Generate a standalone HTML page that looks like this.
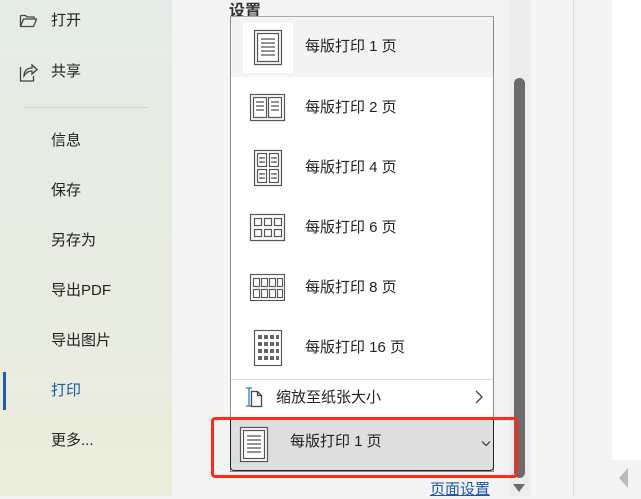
<!DOCTYPE html>
<html><head><meta charset="utf-8"><style>
*{margin:0;padding:0;box-sizing:border-box}
body{width:641px;height:496px;overflow:hidden;position:relative;background:#f4f4f4;font-family:"Liberation Sans","Noto Sans CJK SC",sans-serif;color:#222}
.side{position:absolute;left:0;top:0;width:172px;height:496px;background:linear-gradient(180deg,#e5ece7 0%,#e8ecdf 60%,#eaecdc 100%)}
.si{position:absolute;left:51px;font-size:15px;line-height:20px}
svg{position:absolute}
.dd{position:absolute;left:230px;top:16px;width:264px;height:456px;background:#fff;border:1px solid #8a8a8a;border-top:1px solid #aaa}
.it{position:absolute;left:305px;font-size:15px;line-height:20px;color:#222}
</style></head><body>
<div class="side">
<svg style="left:19px;top:13px" width="20" height="16" viewBox="0 0 20 16"><path d="M1.5 2.5h5l1.5 1.5h7v2M1.5 2.5v11h13l3-7.5h-13l-3 7.5" fill="none" stroke="#444" stroke-width="1.3"/></svg>
<div class="si" style="top:11px">打开</div>
<svg style="left:19px;top:61px" width="20" height="22" viewBox="0 0 20 22"><path d="M1.5 6v14h13v-5" fill="none" stroke="#444" stroke-width="1.3"/><path d="M5 15c0-5 3-8 8-8V4l5 4.5-5 4.5V10c-4 0-6 2-8 5z" fill="none" stroke="#444" stroke-width="1.3"/></svg>
<div class="si" style="top:62px">共享</div>
<div style="position:absolute;left:23px;top:107px;width:125px;height:1px;background:#cfd3cc"></div>
<div class="si" style="top:131px">信息</div>
<div class="si" style="top:181px">保存</div>
<div class="si" style="top:231px">另存为</div>
<div class="si" style="top:281px">导出PDF</div>
<div class="si" style="top:331px">导出图片</div>
<div style="position:absolute;left:3px;top:372px;width:3px;height:38px;background:#1a5fb4"></div>
<div class="si" style="top:381px;color:#1a56a8">打印</div>
<div class="si" style="top:431px">更多...</div>
</div>
<div style="position:absolute;left:229px;top:-3px;font-size:16px;font-weight:bold;color:#333">设置</div>
<div style="position:absolute;left:509px;top:0;width:21px;height:496px;background:#ececec"></div>
<div style="position:absolute;left:514px;top:78px;width:11px;height:400px;background:#6b6b6b;border-radius:6px"></div>
<svg style="left:512px;top:483px" width="14" height="10"><path d="M1 1h12L7 9z" fill="#6b6b6b"/></svg>
<div style="position:absolute;left:573px;top:0;width:1px;height:496px;background:#dcdcdc"></div>
<div style="position:absolute;left:612px;top:0;width:29px;height:460px;background:#fff"></div>
<svg style="left:618px;top:467px" width="12" height="22"><path d="M10 1v20L1 11z" fill="#bbb"/></svg>
<div class="dd"></div>
<div style="position:absolute;left:231px;top:17px;width:262px;height:60px;background:#f3f3f3"></div>
<div style="position:absolute;left:243px;top:23px;width:50px;height:50px;background:#fff"></div>
<svg style="left:240px;top:20px" width="60" height="360" viewBox="0 0 60 360" fill="none" stroke="#555">
<g stroke-width="1.2"><rect x="14.5" y="10.5" width="27" height="34"/><rect x="17.5" y="13.5" width="21" height="28"/>
<path d="M21 19h14M21 23h14M21 27h14M21 31h14M21 35h14"/></g>
<g stroke-width="1.2" transform="translate(0,60)"><rect x="10.5" y="14.5" width="34" height="26"/><rect x="13.5" y="17.5" width="13" height="20"/><rect x="28.5" y="17.5" width="13" height="20"/><path d="M16 22h8M16 26h8M16 30h8M31 22h8M31 26h8M31 30h8"/></g>
<g stroke-width="1.2" transform="translate(0,120)"><rect x="14.5" y="10.5" width="27" height="35"/><rect x="17.5" y="13.5" width="9" height="13"/><rect x="29.5" y="13.5" width="9" height="13"/><rect x="17.5" y="29.5" width="9" height="13"/><rect x="29.5" y="29.5" width="9" height="13"/><path d="M19 18h6M19 22h6M31 18h6M31 22h6M19 34h6M19 38h6M31 34h6M31 38h6"/></g>
<g stroke-width="1.2" transform="translate(0,180)"><rect x="10.5" y="14.5" width="34" height="26"/><rect x="14.5" y="18.5" width="7" height="7"/><rect x="24.5" y="18.5" width="7" height="7"/><rect x="34.5" y="18.5" width="7" height="7"/><rect x="14.5" y="29.5" width="7" height="7"/><rect x="24.5" y="29.5" width="7" height="7"/><rect x="34.5" y="29.5" width="7" height="7"/></g>
<g stroke-width="1.1" transform="translate(0,240)"><rect x="10.5" y="14.5" width="34" height="26"/><rect x="13.5" y="18.5" width="6" height="8"/><rect x="21.5" y="18.5" width="6" height="8"/><rect x="29.5" y="18.5" width="6" height="8"/><rect x="37.5" y="18.5" width="5" height="8"/><rect x="13.5" y="29.5" width="6" height="8"/><rect x="21.5" y="29.5" width="6" height="8"/><rect x="29.5" y="29.5" width="6" height="8"/><rect x="37.5" y="29.5" width="5" height="8"/></g>
<g stroke-width="1.1" transform="translate(0,300)"><rect x="14.5" y="10.5" width="27" height="35"/>
<g fill="#666" stroke="none"><rect x="18" y="15" width="4" height="4"/><rect x="24" y="15" width="4" height="4"/><rect x="30" y="15" width="4" height="4"/><rect x="36" y="15" width="3" height="4"/>
<rect x="18" y="22" width="4" height="4"/><rect x="24" y="22" width="4" height="4"/><rect x="30" y="22" width="4" height="4"/><rect x="36" y="22" width="3" height="4"/>
<rect x="18" y="29" width="4" height="4"/><rect x="24" y="29" width="4" height="4"/><rect x="30" y="29" width="4" height="4"/><rect x="36" y="29" width="3" height="4"/>
<rect x="18" y="36" width="4" height="4"/><rect x="24" y="36" width="4" height="4"/><rect x="30" y="36" width="4" height="4"/><rect x="36" y="36" width="3" height="4"/></g></g>
</svg>
<div class="it" style="top:37px">每版打印 1 页</div>
<div class="it" style="top:98px">每版打印 2 页</div>
<div class="it" style="top:158px">每版打印 4 页</div>
<div class="it" style="top:218px">每版打印 6 页</div>
<div class="it" style="top:278px">每版打印 8 页</div>
<div class="it" style="top:338px">每版打印 16 页</div>
<div style="position:absolute;left:231px;top:379px;width:262px;height:1px;background:#ddd"></div>
<svg style="left:244px;top:386px" width="20" height="22" viewBox="0 0 20 22"><path d="M2 2h6M5 2v18M2 20h6" stroke="#2a7fd0" stroke-width="1.3" fill="none"/><path d="M7.5 5.5h6l4 4v11h-10z M13.5 5.5v4h4" stroke="#444" stroke-width="1.3" fill="none"/></svg>
<div class="it" style="left:276px;top:388px">缩放至纸张大小</div>
<svg style="left:474px;top:390px" width="10" height="14"><path d="M2 1l6 6-6 6" stroke="#444" stroke-width="1.3" fill="none"/></svg>
<div style="position:absolute;left:230px;top:418px;width:264px;height:53px;background:#dedede;border:1.5px solid #222;border-top:1px solid #999;border-radius:0 0 4px 4px"></div>
<svg style="left:238px;top:425px" width="32" height="40" viewBox="0 0 32 40" fill="none" stroke="#555" stroke-width="1.2"><rect x="2.5" y="2.5" width="27" height="34" fill="#fff"/><rect x="5.5" y="5.5" width="21" height="28"/><path d="M9 11h14M9 15h14M9 19h14M9 23h14M9 27h14"/></svg>
<div class="it" style="left:290px;top:432px">每版打印 1 页</div>
<svg style="left:481px;top:440px" width="10" height="8"><path d="M1 1.5l4 4 4-4" stroke="#333" stroke-width="1.2" fill="none"/></svg>
<div style="position:absolute;left:211px;top:417px;width:307px;height:61px;border:3px solid #ff2a1a;border-radius:4px"></div>
<div style="position:absolute;left:430px;top:478px;font-size:15px;color:#1a56b8;text-decoration:underline">页面设置</div>
</body></html>
